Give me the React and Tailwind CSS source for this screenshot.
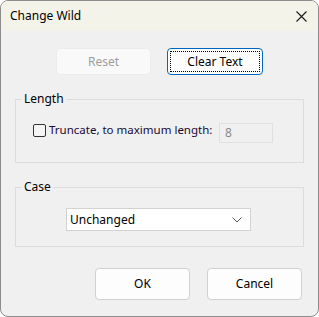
import React from 'react';

const font = { fontFamily: '"Noto Sans", "Open Sans", sans-serif' };

function Btn({ children, disabled, focused, className = '' }) {
  if (focused) {
    return (
      <button className={`h-[27px] rounded-[4px] border border-[#0067c0] bg-[#fdfdfd] p-[2px] text-[12px] text-black ${className}`}>
        <div className="flex h-full w-full items-center justify-center border border-dotted border-black">{children}</div>
      </button>
    );
  }
  return (
    <button
      disabled={disabled}
      className={`flex items-center justify-center rounded-[4px] border text-[12px] ${disabled ? 'border-[#ececec] bg-[#f9f9f9] text-[#9d9d9d]' : 'border-[#d0d0d0] bg-[#fdfdfd] text-black'} ${className}`}
    >
      {children}
    </button>
  );
}

export default function App() {
  return (
    <div style={font} className="flex h-[317px] w-[319px] flex-col overflow-hidden rounded-[8px] border border-[#8c8c8c] bg-[#f0f0f0] text-[12px] text-black">
      {/* title bar */}
      <div className="flex h-[30px] shrink-0 items-center justify-between bg-[#f4f3ea] pl-[9px] pr-[10px]">
        <span className="text-[12px]">Change Wild</span>
        <svg width="11" height="11" viewBox="0 0 11 11" className="mr-[1px]">
          <path d="M0.5 0.5 L10.5 10.5 M10.5 0.5 L0.5 10.5" stroke="#1a1a1a" strokeWidth="1.1" />
        </svg>
      </div>

      <div className="flex flex-1 flex-col px-[14px]">
        <div className="mt-[17px] flex gap-[16px] pl-[41px]">
          <Btn disabled className="h-[27px] w-[95px]">Reset</Btn>
          <Btn focused className="w-[96px]">Clear Text</Btn>
        </div>

        <fieldset className="mt-[16px] h-[72px] border border-[#dcdcdc]">
          <legend className="ml-[6px] px-[2px] leading-[16px]">Length</legend>
          <div className="mt-[16px] flex items-start pl-[17px] pr-[30px]">
            <div className="mt-[1px] h-[13px] w-[13px] shrink-0 rounded-[2px] border border-[#333] bg-[#f5f5f5]" />
            <span className="ml-[3px] mt-[-1px] whitespace-nowrap text-[11.5px] leading-[16px] text-[#1a0a33]">Truncate, to maximum length:</span>
            <div className="ml-auto flex h-[20px] w-[54px] shrink-0 items-center border border-[#e0e0e0] pl-[5px] text-[#8a8a8a]">8</div>
          </div>
        </fieldset>

        <fieldset className="mt-[16px] h-[68px] border border-[#dcdcdc]">
          <legend className="ml-[6px] px-[2px] leading-[16px]">Case</legend>
          <div className="mt-[13px] ml-[50px] flex h-[23px] w-[185px] items-center justify-between border border-[#d2d2d2] bg-white pl-[3px] pr-[8px]">
            <span>Unchanged</span>
            <svg width="10" height="6" viewBox="0 0 10 6">
              <path d="M0.5 0.5 L5 5 L9.5 0.5" fill="none" stroke="#555" strokeWidth="1" />
            </svg>
          </div>
        </fieldset>

        <div className="mt-[21px] flex justify-end gap-[17px] pr-[2px]">
          <Btn className="h-[32px] w-[95px]">OK</Btn>
          <Btn className="h-[32px] w-[95px]">Cancel</Btn>
        </div>
      </div>
    </div>
  );
}
